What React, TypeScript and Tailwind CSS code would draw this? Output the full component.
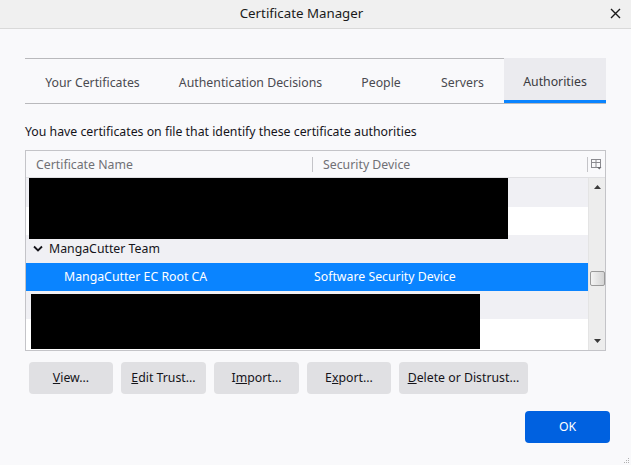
import React from 'react';

const tabs = [
  { t: 'Your Certificates', w: 'w-[135px]' },
  { t: 'Authentication Decisions', w: 'w-[181px]' },
  { t: 'People', w: 'w-[80px]' },
  { t: 'Servers', w: 'w-[83px]' },
  { t: 'Authorities', w: 'w-[102px]' },
];

function Btn({ children, w }: { children: React.ReactNode; w: string }) {
  return (
    <button className={`h-[32px] ${w} rounded-[4px] bg-[#e0e0e3] text-[12.3px] text-[#15141a] whitespace-nowrap`}>
      {children}
    </button>
  );
}

export default function App() {
  return (
    <div className="w-[631px] h-[465px] bg-[#f9f9fb] relative overflow-hidden text-[#15141a]" style={{ fontFamily: '"Noto Sans", sans-serif' }}>
      {/* title bar */}
      <div className="h-[29px] bg-[#f0f0f0] border-b border-[#d9d9d9] flex items-center justify-center pr-[28px] relative">
        <span className="text-[13.3px] text-[#1a1a1a]">Certificate Manager</span>
        <svg className="absolute right-[10px] top-[8px]" width="11" height="11" viewBox="0 0 11 11">
          <path d="M1 1L10 10M10 1L1 10" stroke="#1a1a1a" strokeWidth="1.4" />
        </svg>
      </div>

      <div className="px-[25px] pt-[29px]">
        {/* tabs */}
        <div className="flex border-b border-[#b9b9bc] w-[581px]">
          {tabs.map(({ t, w }) => {
            const active = t === 'Authorities';
            return (
              <div
                key={t}
                className={
                  active
                    ? `h-[45px] ${w} bg-[#ebebef] border-b-[3px] border-[#0a84ff] flex items-center justify-center text-[12.3px] text-[#3a3a40] whitespace-nowrap`
                    : `h-[45px] ${w} border-t border-[#b9b9bc] flex items-center justify-center text-[12.3px] text-[#4a4a50] whitespace-nowrap`
                }
              >
                <span className={active ? 'pt-[6px]' : 'pt-[4px]'}>{t}</span>
              </div>
            );
          })}
        </div>

        <div className="mt-[19px] text-[12.3px] text-[#15141a] leading-[18px] whitespace-nowrap">
          You have certificates on file that identify these certificate authorities
        </div>

        {/* tree */}
        <div className="mt-[9px] w-[581px] h-[201px] border border-[#c4c4c8] bg-white relative flex flex-col">
          <div className="h-[27px] bg-[#f9f9fb] border-b border-[#e0e0e3] flex items-center text-[12.3px] text-[#707075]">
            <div className="w-[286px] pl-[10px] pt-[2px]">Certificate Name</div>
            <div className="w-[1px] h-[15px] bg-[#c4c4c8]" />
            <div className="flex-1 pl-[10px] pt-[2px]">Security Device</div>
            <div className="w-[1px] h-[15px] bg-[#c4c4c8]" />
            <div className="w-[17px] flex justify-center">
              <svg width="11" height="11" viewBox="0 0 11 11">
                <rect x="0.5" y="0.5" width="9" height="8" fill="none" stroke="#8a8a8f" />
                <path d="M0.5 3.5H9.5M5 0.5V8.5" stroke="#8a8a8f" />
                <path d="M6 8L10.5 8L8.25 10.5Z" fill="#6a6a6f" />
              </svg>
            </div>
          </div>
          <div className="flex flex-1">
            <div className="flex-1 flex flex-col text-[12.3px]">
              <div className="h-[29px] bg-[#f0f0f4]" />
              <div className="h-[28px] bg-white" />
              <div className="h-[28px] bg-[#f0f0f4] flex items-center pl-[7px]">
                <svg width="10" height="8" viewBox="0 0 10 8" className="mr-[6px]">
                  <path d="M1 1.5L5 5.5L9 1.5" fill="none" stroke="#15141a" strokeWidth="1.8" />
                </svg>
                <span>MangaCutter Team</span>
              </div>
              <div className="h-[28px] bg-[#0a84ff] text-white flex items-center">
                <span className="w-[288px] pl-[38px]">MangaCutter EC Root CA</span>
                <span>Software Security Device</span>
              </div>
              <div className="h-[28px] bg-[#f0f0f4]" />
              <div className="h-[28px] bg-white" />
            </div>
            <div className="w-[17px] bg-[#ededed] border-l border-[#e4e4e4] flex flex-col items-center justify-between py-[7px] relative">
              <svg width="7" height="4" viewBox="0 0 7 4"><path d="M0 4L3.5 0L7 4Z" fill="#3a3a3a" /></svg>
              <svg width="7" height="4" viewBox="0 0 7 4"><path d="M0 0L3.5 4L7 0Z" fill="#3a3a3a" /></svg>
              <div className="absolute left-[1px] top-[93px] w-[15px] h-[15px] rounded-[2px] border border-[#9a9a9a] bg-gradient-to-r from-[#f4f4f4] to-[#d4d4d4]" />
            </div>
          </div>
          {/* redactions */}
          <div className="absolute left-[3px] top-[27px] w-[479px] h-[61px] bg-black" />
          <div className="absolute left-[5px] top-[143px] w-[449px] h-[55px] bg-black" />
        </div>

        {/* action buttons */}
        <div className="mt-[11px] pl-[4px] flex gap-[8px]">
          <Btn w="w-[84px]"><u>V</u>iew...</Btn>
          <Btn w="w-[85px]"><u>E</u>dit Trust...</Btn>
          <Btn w="w-[85px]">I<u>m</u>port...</Btn>
          <Btn w="w-[84px]">E<u>x</u>port...</Btn>
          <Btn w="w-[129px]"><u>D</u>elete or Distrust...</Btn>
        </div>

        <div className="mt-[17px] flex justify-end">
          <button className="h-[32px] w-[85px] mr-[-4px] rounded-[4px] bg-[#0061e0] text-white text-[12.3px]">OK</button>
        </div>
      </div>

      <svg className="absolute right-[1px] bottom-[1px]" width="8" height="8" viewBox="0 0 8 8">
        <rect x="6" y="2" width="1" height="1" fill="#b0b0b0" />
        <rect x="4" y="4" width="1" height="1" fill="#b0b0b0" />
        <rect x="6" y="4" width="1" height="1" fill="#b0b0b0" />
        <rect x="2" y="6" width="1" height="1" fill="#b0b0b0" />
        <rect x="4" y="6" width="1" height="1" fill="#b0b0b0" />
        <rect x="6" y="6" width="1" height="1" fill="#b0b0b0" />
      </svg>
    </div>
  );
}
